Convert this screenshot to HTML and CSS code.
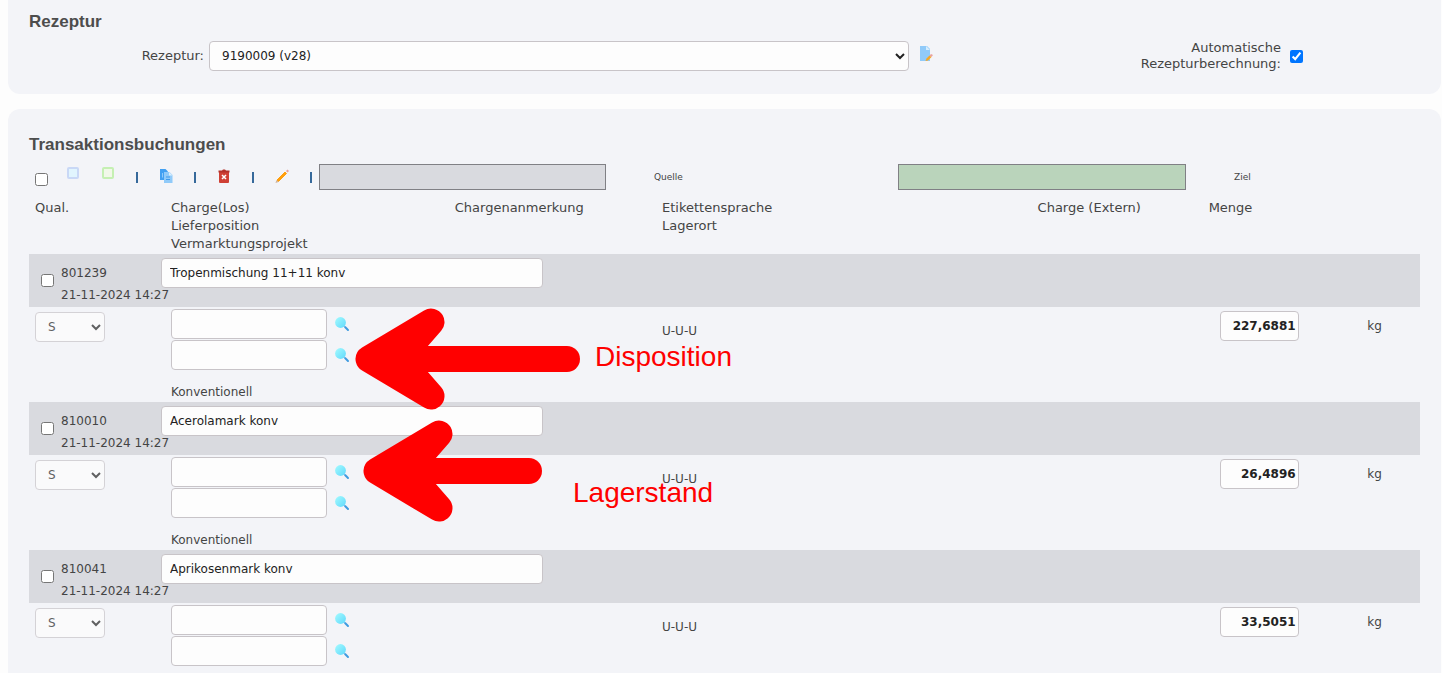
FILE: index.html
```
<!DOCTYPE html>
<html lang="de">
<head>
  <meta charset="UTF-8">
  <meta name="viewport" content="width=device-width,initial-scale=1.0">
  <title>Transaktionsbuchungen</title>
  <link rel="stylesheet" href="styles.css">
</head>
<body>
  <!-- Icons -->
  <svg class="sprite" aria-hidden="true">
    <defs>
      <linearGradient id="glass" x1="0" y1="0" x2="1" y2="1">
        <stop offset="0" stop-color="#a4fbff"/>
        <stop offset="1" stop-color="#5fd8fb"/>
      </linearGradient>
      <symbol id="i-search" viewBox="0 0 16 16">
        <path d="M9.500 9.500L11.500 11.500" stroke="#8cc4ee" stroke-width="1.500"/>
        <path d="M11.300 11.300L14 14" stroke="#3f9be0" stroke-width="2" stroke-linecap="round"/>
        <circle cx="6.500" cy="6.500" r="5.400" fill="url(#glass)"/>
      </symbol>
      <symbol id="i-arrow" viewBox="0 0 240 104">
        <path d="M15 52L77 15L50 46V58L77 89Z" fill="red" stroke="red" stroke-width="27" stroke-linejoin="round"/>
      </symbol>
    </defs>
  </svg>

  <main class="page">
    <!-- Rezeptur -->
    <section class="card card-top">
      <h2>Rezeptur</h2>
      <div class="recipe-row">
        <label for="recipe">Rezeptur:</label>
        <select id="recipe" class="field"><option>9190009 (v28)</option></select>
        <button class="icon-btn" type="button" aria-label="Rezeptur bearbeiten">
          <svg width="16" height="16" viewBox="0 0 16 16">
            <path d="M2 1H9L12 4V16H2Z" fill="#90caf9"/>
            <path d="M8 1L12 5H8Z" fill="#d6edfd"/>
            <path d="M7.500 16L8.500 13.500L11.500 10.500L13.500 12L10 15.500Z" fill="#f5a623"/>
            <path d="M11.500 10.500L13 9L15 10L13.500 12Z" fill="#e8a3a0"/>
          </svg>
        </button>
        <label for="auto">Automatische Rezepturberechnung:</label>
        <input type="checkbox" id="auto" checked>
      </div>
    </section>

    <!-- Buchungen -->
    <section class="card">
      <h2>Transaktionsbuchungen</h2>
      <div class="toolbar">
        <div class="tools">
          <input type="checkbox" aria-label="Alle">
          <button class="icon-btn" type="button" aria-label="Quelle wählen">
            <svg width="14" height="14" viewBox="0 0 14 14"><rect x="2" y="2" width="10" height="10" rx="1" fill="#e1f5fe" stroke="#c9d8f6" stroke-width="2"/></svg>
          </button>
          <button class="icon-btn" type="button" aria-label="Ziel wählen">
            <svg width="14" height="14" viewBox="0 0 14 14"><rect x="2" y="2" width="10" height="10" rx="1" fill="#f1f8e9" stroke="#c5f0b3" stroke-width="2"/></svg>
          </button>
          <i class="sep"></i>
          <button class="icon-btn low" type="button" aria-label="Kopieren">
            <svg width="16" height="16" viewBox="0 0 16 16">
              <path d="M2 1H7.500L10 3.500V12H2Z" fill="#42a0f2"/>
              <path d="M6 4H11.500L14.500 7V15H6Z" fill="#90caf9"/>
              <path d="M11 4V7.500H14.500Z" fill="#d9eefe"/>
              <path d="M8 9H12M8 11.500H12" stroke="#3f9bee"/>
              <path d="M4.500 5V9.500" stroke="#90caf9"/>
            </svg>
          </button>
          <i class="sep"></i>
          <button class="icon-btn low" type="button" aria-label="Löschen">
            <svg width="16" height="16" viewBox="0 0 16 16">
              <path d="M3 4H13V14Q13 15 12 15H4Q3 15 3 14Z" fill="#cf4035"/>
              <path d="M2.500 2.500H6L7 1.500H9L10 2.500H13.500V4.500H2.500Z" fill="#b3312a"/>
              <path d="M6 7L10 11M10 7L6 11" stroke="#fff" stroke-width="1.500"/>
            </svg>
          </button>
          <i class="sep"></i>
          <button class="icon-btn low" type="button" aria-label="Bearbeiten">
            <svg width="16" height="16" viewBox="0 0 16 16">
              <path d="M3 12L11 4L12.500 5.500L4.500 13.500Z" fill="#ff9f0f" stroke="#ff9f0f"/>
              <path d="M12 3L13.500 1.500L15 3L13.500 4.500Z" fill="#e8a09c"/>
              <path d="M1.500 15L2.500 12L4.500 14Z" fill="#cdb29a"/>
            </svg>
          </button>
          <i class="sep"></i>
        </div>
        <span class="swatch source"></span>
        <span class="legend">Quelle</span>
        <span class="swatch target"></span>
        <span class="legend">Ziel</span>
      </div>

      <table class="bookings">
        <colgroup>
          <col class="c-qual"><col class="c-lot"><col class="c-note"><col class="c-lang"><col class="c-ext"><col class="c-amount"><col class="c-unit">
        </colgroup>
        <thead>
          <tr>
            <th>Qual.</th>
            <th>Charge(Los)<br>Lieferposition<br>Vermarktungsprojekt</th>
            <th>Chargenanmerkung</th>
            <th>Etikettensprache<br>Lagerort</th>
            <th>Charge (Extern)</th>
            <th>Menge</th>
            <th></th>
          </tr>
        </thead>
        <tbody>
          <tr class="product">
            <td>
              <div class="pick"><input type="checkbox" id="p1"><label for="p1">801239<br>21-11-2024 14:27</label></div>
            </td>
            <td colspan="6"><input class="field name" type="text" value="Tropenmischung 11+11 konv" aria-label="Artikel"></td>
          </tr>
          <tr class="detail">
            <td><select class="field qual" disabled aria-label="Qualität"><option>S</option></select></td>
            <td>
              <div class="lookup"><input class="field" type="text" aria-label="Charge"><button class="icon-btn" type="button" aria-label="Charge suchen"><svg width="16" height="16"><use href="#i-search"/></svg></button></div>
              <div class="lookup"><input class="field" type="text" aria-label="Lieferposition"><button class="icon-btn" type="button" aria-label="Lieferposition suchen"><svg width="16" height="16"><use href="#i-search"/></svg></button></div>
              <p class="project">Konventionell</p>
            </td>
            <td></td>
            <td class="lang">U-U-U</td>
            <td></td>
            <td><input class="field amount" type="text" value="227,6881" aria-label="Menge"></td>
            <td class="unit">kg</td>
          </tr>
        </tbody>
        <tbody>
          <tr class="product">
            <td>
              <div class="pick"><input type="checkbox" id="p2"><label for="p2">810010<br>21-11-2024 14:27</label></div>
            </td>
            <td colspan="6"><input class="field name" type="text" value="Acerolamark konv" aria-label="Artikel"></td>
          </tr>
          <tr class="detail">
            <td><select class="field qual" disabled aria-label="Qualität"><option>S</option></select></td>
            <td>
              <div class="lookup"><input class="field" type="text" aria-label="Charge"><button class="icon-btn" type="button" aria-label="Charge suchen"><svg width="16" height="16"><use href="#i-search"/></svg></button></div>
              <div class="lookup"><input class="field" type="text" aria-label="Lieferposition"><button class="icon-btn" type="button" aria-label="Lieferposition suchen"><svg width="16" height="16"><use href="#i-search"/></svg></button></div>
              <p class="project">Konventionell</p>
            </td>
            <td></td>
            <td class="lang">U-U-U</td>
            <td></td>
            <td><input class="field amount" type="text" value="26,4896" aria-label="Menge"></td>
            <td class="unit">kg</td>
          </tr>
        </tbody>
        <tbody>
          <tr class="product">
            <td>
              <div class="pick"><input type="checkbox" id="p3"><label for="p3">810041<br>21-11-2024 14:27</label></div>
            </td>
            <td colspan="6"><input class="field name" type="text" value="Aprikosenmark konv" aria-label="Artikel"></td>
          </tr>
          <tr class="detail">
            <td><select class="field qual" disabled aria-label="Qualität"><option>S</option></select></td>
            <td>
              <div class="lookup"><input class="field" type="text" aria-label="Charge"><button class="icon-btn" type="button" aria-label="Charge suchen"><svg width="16" height="16"><use href="#i-search"/></svg></button></div>
              <div class="lookup"><input class="field" type="text" aria-label="Lieferposition"><button class="icon-btn" type="button" aria-label="Lieferposition suchen"><svg width="16" height="16"><use href="#i-search"/></svg></button></div>
            </td>
            <td></td>
            <td class="lang">U-U-U</td>
            <td></td>
            <td><input class="field amount" type="text" value="33,5051" aria-label="Menge"></td>
            <td class="unit">kg</td>
          </tr>
        </tbody>
      </table>
    </section>

    <!-- Hinweispfeile über der Tabelle -->
    <svg class="arrow arrow-1" width="240" height="104" viewBox="0 0 240 104">
      <use href="#i-arrow" width="240" height="104"/>
      <path d="M40 52H213" stroke="red" stroke-width="26" stroke-linecap="round"/>
    </svg>
    <span class="hint hint-1">Disposition</span>
    <svg class="arrow arrow-2" width="240" height="104" viewBox="0 0 240 104">
      <use href="#i-arrow" width="240" height="104"/>
      <path d="M40 52H167" stroke="red" stroke-width="26" stroke-linecap="round"/>
    </svg>
    <span class="hint hint-2">Lagerstand</span>
  </main>
</body>
</html>
```

FILE: styles.css
```
* { box-sizing: border-box; }
body { margin: 0; background: #fdfdfd; color: #444; font: 13px/18px "DejaVu Sans", Verdana, sans-serif; }
.sprite { position: absolute; width: 0; height: 0; }
.page { position: relative; padding: 0 1px 0 8px; }

.card { background: #f3f4f8; border-radius: 12px; padding: 25px 21px 8px; margin-bottom: 15px; }
.card:last-of-type { margin-bottom: 0; border-radius: 12px 12px 0 0; }
.card-top { border-radius: 0 0 12px 12px; padding-top: 11px; padding-bottom: 22px; }
h2 { margin: 0; font: bold 17px/22px "Liberation Sans", Arial, sans-serif; color: #4d4d4d; }

input[type="checkbox"] { width: 13px; height: 13px; margin: 0; flex: none; }
.field { height: 30px; border: 1px solid #c8c4c8; border-radius: 4px; background: #fdfdfd; color: #222; font: 12px "DejaVu Sans", Verdana, sans-serif; padding: 0 8px; }
.icon-btn { display: block; border: 0; padding: 0; background: none; cursor: pointer; }
.icon-btn svg { display: block; }

.recipe-row { display: grid; grid-template-columns: 175px 700fr 218px 144px 134fr; align-items: center; column-gap: 5px; padding-top: 7px; line-height: 16px; }
.recipe-row label { text-align: right; }
.recipe-row .icon-btn { justify-self: start; padding: 0 0 6px 4px; }
.recipe-row input { margin-left: 4px; }

.toolbar { display: grid; grid-template-columns: 290px 287fr 292fr 288fr 234fr; align-items: center; height: 42px; }
.tools { display: flex; align-items: center; height: 26px; padding-left: 6px; }
.tools input { margin: 4px 18px 0 0; }
.tools .icon-btn { margin: 0 21px 8px 0; }
.tools .icon-btn.low { margin: 0 20px 2px; }
.sep { width: 2px; height: 11px; background: #36699b; flex: none; }
.swatch { height: 26px; border: 1px solid #808085; }
.source { background: #d9dadf; }
.target { background: #bad4bb; }
.legend { padding-left: 48px; font-size: 9px; }

.bookings { width: 100%; border-collapse: collapse; table-layout: fixed; }
.c-qual { width: 132px; }
.c-lot { width: 20.4%; }
.c-note { width: 14.9%; }
.c-lang { width: 27%; }
.c-ext { width: 12.3%; }
.c-amount { width: 11.4%; }
th { font-weight: normal; text-align: left; vertical-align: top; padding: 1px 10px 0; height: 56px; }
th:first-child { padding-left: 6px; }
td { padding: 0 10px; vertical-align: top; font-size: 12px; }
td:first-child { padding: 0 0 0 6px; }
.product { height: 53px; background: #d9dadf; }
.product td { padding-top: 4px; }
.product td + td { padding-left: 0; }
.pick { display: flex; align-items: center; gap: 7px; padding: 4px 0 0 6px; white-space: nowrap; line-height: 22px; }
.pick input { margin-bottom: 7px; }
.name { width: 382px; max-width: 100%; }
.detail { height: 95px; }
.qual { width: 70px; margin-top: 5px; }
.lookup { display: flex; align-items: center; gap: 7px; margin-bottom: 1px; }
.lookup:first-child { margin-top: 2px; }
.lookup .field { width: 156px; }
.project { margin: 13px 0 0; }
.detail .lang { padding-top: 15px; }
.amount { width: 79px; margin: 4px 0 0 11px; padding: 0 2px; text-align: right; font-weight: bold; }
.detail .unit { padding-top: 10px; }

.arrow { position: absolute; fill: none; }
.arrow-1 { left: 354px; top: 307px; }
.arrow-2 { left: 362px; top: 419px; }
.hint { position: absolute; font: 28px/32px "Liberation Sans", Arial, sans-serif; color: red; }
.hint-1 { left: 595px; top: 341px; }
.hint-2 { left: 573px; top: 477px; }
```
